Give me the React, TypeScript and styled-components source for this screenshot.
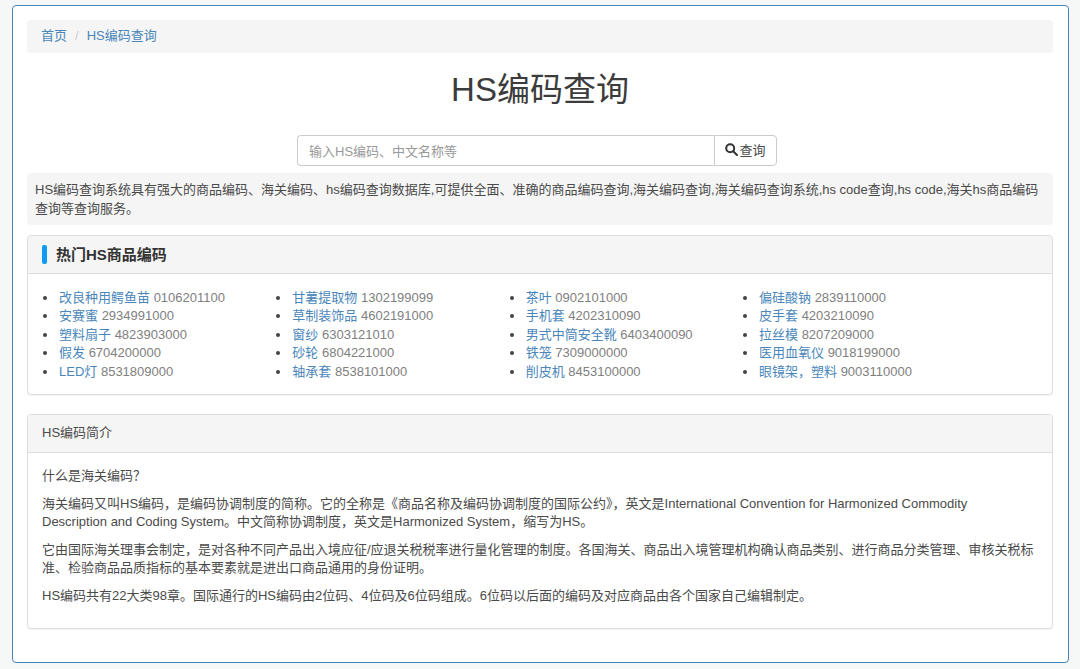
import React from 'react'
import styled, { createGlobalStyle } from 'styled-components'

const GlobalStyle = createGlobalStyle`
    html, body {
        margin: 0;
        padding: 0;
        background: #f6f7f7;
    }
    body {
        font-family: "Liberation Sans", "Noto Sans CJK SC", sans-serif;
        font-size: 13px;
        line-height: 18.57px;
        color: #4a4a4a;
    }
    * {
        box-sizing: border-box;
    }
`

const Page = styled.div`
    width: 1080px;
    height: 669px;
    overflow: hidden;
    padding: 5px 11px 0 12px;
`

const Main = styled.div`
    height: 658px;
    background: #fff;
    border: 1px solid #4584ba;
    border-radius: 4px;
    padding: 14px 15px 0 14px;
`

const Breadcrumb = styled.div`
    height: 33px;
    background: #f5f5f5;
    border-radius: 4px;
    padding: 0 14px;
    display: flex;
    align-items: center;
    gap: 8px;
`

const Link = styled.a`
    color: #4a86ba;
    text-decoration: none;
`

const Slash = styled.span`
    color: #ccc;
`

const Title = styled.h1`
    margin: 0;
    height: 82px;
    padding-bottom: 9px;
    display: flex;
    align-items: center;
    justify-content: center;
    font-size: 33px;
    font-weight: 400;
    line-height: 40px;
    color: #3c3c3c;
`

const SearchGroup = styled.div`
    width: 480px;
    height: 31px;
    margin: 0 0 7px 270px;
    display: flex;
`

const SearchInput = styled.input`
    flex: 1;
    min-width: 0;
    height: 100%;
    padding: 1px 11px 0;
    border: 1px solid #ccc;
    border-right: 0;
    border-radius: 4px 0 0 4px;
    font: inherit;
    color: #555;
    outline: none;
    &::placeholder {
        color: #999;
    }
`

const SearchButton = styled.button`
    width: 63px;
    height: 100%;
    padding: 1px 0 0;
    background: #fff;
    border: 1px solid #ccc;
    border-radius: 0 4px 4px 0;
    font: inherit;
    color: #4a4a4a;
    display: flex;
    align-items: center;
    justify-content: center;
`

const SearchIcon = styled.svg`
    width: 13px;
    height: 13px;
    margin: -3px 1px 0 0;
`

const Intro = styled.div`
    height: 52px;
    background: #f5f5f5;
    border-radius: 4px;
    padding: 8px 8px 0;
    margin-bottom: 10px;
`

const Panel = styled.section<{ $height: number }>`
    height: ${(p) => p.$height}px;
    background: #fff;
    border: 1px solid #ddd;
    border-radius: 4px;
    box-shadow: 0 1px 1px rgba(0, 0, 0, 0.05);
    margin-bottom: 19px;
`

const PanelHeading = styled.div`
    height: 38px;
    background: #f5f5f5;
    border-bottom: 1px solid #ddd;
    border-radius: 3px 3px 0 0;
    padding: 0 14px;
    display: flex;
    align-items: center;
`

const HotTitle = styled.h3`
    margin: 0;
    font-size: 15px;
    font-weight: 700;
    line-height: 20px;
    padding-left: 14px;
    position: relative;
    color: #333;
    &::before {
        content: '';
        position: absolute;
        left: 0;
        top: 0;
        width: 5px;
        height: 19px;
        border-radius: 2px;
        background: #0f9bf5;
    }
`

const HotGrid = styled.div`
    display: grid;
    grid-template-columns: repeat(4, 233.33px);
    padding: 14.5px 14px 0;
`

const HotList = styled.ul`
    margin: 0;
    padding: 0 0 0 17px;
    list-style: none;
    color: #808080;
`

const HotItem = styled.li`
    position: relative;
    &::before {
        content: '';
        position: absolute;
        left: -16px;
        top: 7px;
        width: 4px;
        height: 4px;
        border-radius: 50%;
        background: #444;
    }
`

const PanelBody = styled.div`
    padding: 14px 14px 0;
`

const Para = styled.p`
    margin: 0 0 9px;
    max-width: 992px;
`

const columns = [
    [
        ['改良种用鳄鱼苗', '0106201100'],
        ['安赛蜜', '2934991000'],
        ['塑料扇子', '4823903000'],
        ['假发', '6704200000'],
        ['LED灯', '8531809000'],
    ],
    [
        ['甘薯提取物', '1302199099'],
        ['草制装饰品', '4602191000'],
        ['窗纱', '6303121010'],
        ['砂轮', '6804221000'],
        ['轴承套', '8538101000'],
    ],
    [
        ['茶叶', '0902101000'],
        ['手机套', '4202310090'],
        ['男式中筒安全靴', '6403400090'],
        ['铁笼', '7309000000'],
        ['削皮机', '8453100000'],
    ],
    [
        ['偏硅酸钠', '2839110000'],
        ['皮手套', '4203210090'],
        ['拉丝模', '8207209000'],
        ['医用血氧仪', '9018199000'],
        ['眼镜架，塑料', '9003110000'],
    ],
]

const App: React.FC = () => {
    return (
        <>
            <GlobalStyle />
            <Page>
                <Main>
                    <Breadcrumb>
                        <Link href="#">首页</Link>
                        <Slash>/</Slash>
                        <Link href="#">HS编码查询</Link>
                    </Breadcrumb>
                    <Title>HS编码查询</Title>
                    <SearchGroup>
                        <SearchInput placeholder="输入HS编码、中文名称等" />
                        <SearchButton>
                            <SearchIcon viewBox="0 0 13 13" fill="none" stroke="#333" strokeWidth="2">
                                <circle cx="5.2" cy="5.2" r="4" />
                                <path d="M8.2 8.2 L12 12" strokeLinecap="round" />
                            </SearchIcon>
                            查询
                        </SearchButton>
                    </SearchGroup>
                    <Intro>
                        HS编码查询系统具有强大的商品编码、海关编码、hs编码查询数据库,可提供全面、准确的商品编码查询,海关编码查询,海关编码查询系统,hs code查询,hs code,海关hs商品编码查询等查询服务。
                    </Intro>
                    <Panel $height={160}>
                        <PanelHeading>
                            <HotTitle>热门HS商品编码</HotTitle>
                        </PanelHeading>
                        <HotGrid>
                            {columns.map((items) => (
                                <HotList key={items[0][1]}>
                                    {items.map(([name, code]) => (
                                        <HotItem key={code}>
                                            <Link href="#">{name}</Link> {code}
                                        </HotItem>
                                    ))}
                                </HotList>
                            ))}
                        </HotGrid>
                    </Panel>
                    <Panel $height={215}>
                        <PanelHeading>HS编码简介</PanelHeading>
                        <PanelBody>
                            <Para>什么是海关编码？</Para>
                            <Para>
                                海关编码又叫HS编码，是编码协调制度的简称。它的全称是《商品名称及编码协调制度的国际公约》，英文是International Convention for Harmonized Commodity Description and Coding System。中文简称协调制度，英文是Harmonized System，缩写为HS。
                            </Para>
                            <Para>
                                它由国际海关理事会制定，是对各种不同产品出入境应征/应退关税税率进行量化管理的制度。各国海关、商品出入境管理机构确认商品类别、进行商品分类管理、审核关税标准、检验商品品质指标的基本要素就是进出口商品通用的身份证明。
                            </Para>
                            <Para>
                                HS编码共有22大类98章。国际通行的HS编码由2位码、4位码及6位码组成。6位码以后面的编码及对应商品由各个国家自己编辑制定。
                            </Para>
                        </PanelBody>
                    </Panel>
                </Main>
            </Page>
        </>
    )
}

export default App
